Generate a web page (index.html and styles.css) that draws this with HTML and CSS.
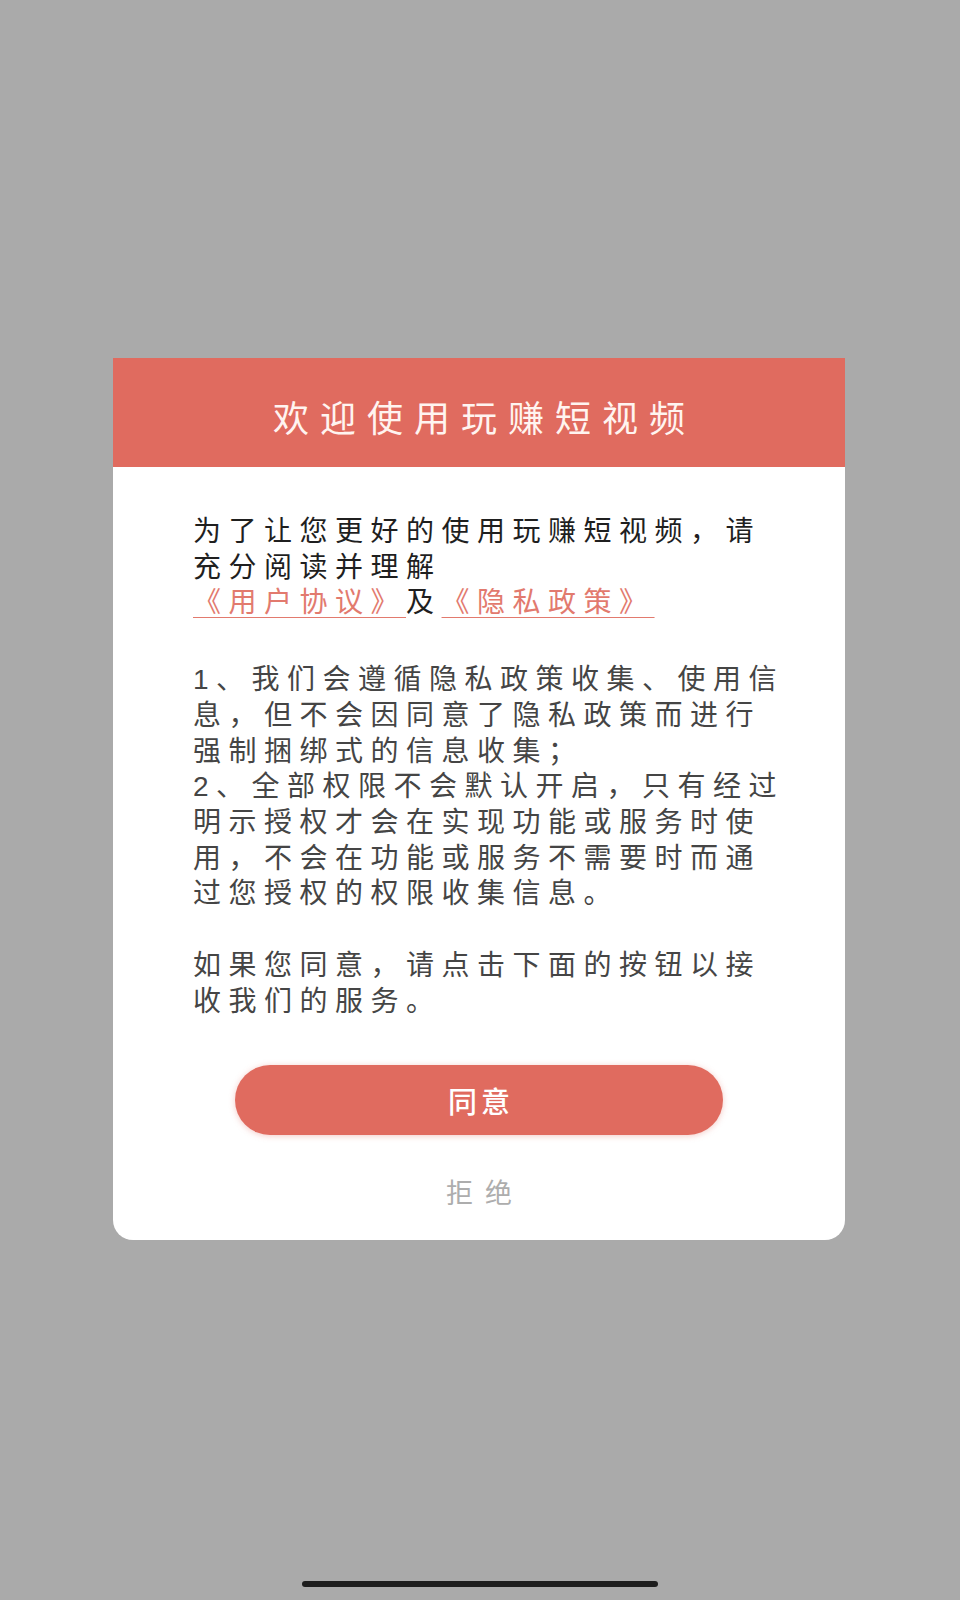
FILE: index.html
```html
<!DOCTYPE html>
<html lang="zh-CN">
<head>
<meta charset="utf-8">
<title>欢迎使用玩赚短视频</title>
<link rel="stylesheet" href="styles.css">
</head>
<body>
<div class="screen">
  <div class="dialog">
    <div class="dialog-header">欢迎使用玩赚短视频</div>
    <div class="dialog-body">
      <p class="intro">为了让您更好的使用玩赚短视频，请充分阅读并理解<br><a class="link" href="#">《用户协议》</a>及<a class="link" href="#">《隐私政策》</a></p>
      <p class="terms terms-list">1、我们会遵循隐私政策收集、使用信息，但不会因同意了隐私政策而进行强制捆绑式的信息收集；<br>2、全部权限不会默认开启，只有经过明示授权才会在实现功能或服务时使用，不会在功能或服务不需要时而通过您授权的权限收集信息。</p>
      <p class="terms terms-consent">如果您同意，请点击下面的按钮以接收我们的服务。</p>
      <button class="btn-agree">同意</button>
      <div class="btn-reject">拒绝</div>
    </div>
  </div>
  <div class="home-indicator"></div>
</div>
</body>
</html>
```

FILE: styles.css
```css
html, body {
  margin: 0;
  padding: 0;
  background: #aaaaaa;
}
.screen {
  width: 960px;
  height: 1600px;
  display: flex;
  flex-direction: column;
  align-items: center;
  padding-top: 358px;
  box-sizing: border-box;
  font-family: "Noto Sans CJK SC", "Noto Sans", sans-serif;
}
.dialog {
  width: 732px;
  margin-left: -2px;
  background: #ffffff;
  border-radius: 0 0 20px 20px;
  overflow: hidden;
}
.dialog-header {
  height: 109px;
  box-sizing: border-box;
  padding: 6px 0 0 11px;
  background: #e06b5f;
  color: #fff4f0;
  font-size: 36px;
  letter-spacing: 11px;
  display: flex;
  align-items: center;
  justify-content: center;
}
.dialog-body {
  padding: 47px 55px 30px 80px;
  display: flex;
  flex-direction: column;
}
.dialog-body p {
  margin: 0;
  font-family: "Liberation Sans", "Noto Sans CJK SC", sans-serif;
  font-size: 28px;
  line-height: 35.7px;
  letter-spacing: 7.5px;
}
.intro {
  color: #1f1f1f;
}
.terms {
  color: #454545;
}
.terms-list {
  margin-top: 41px !important;
}
.terms-consent {
  margin-top: 36px !important;
}
.link {
  color: #e27a6e;
  text-decoration: underline;
  text-underline-offset: 5px;
  text-decoration-thickness: 1px;
}
.btn-agree {
  align-self: center;
  margin-top: 46px;
  margin-left: -25px;
  width: 488px;
  height: 70px;
  border: none;
  border-radius: 35px;
  background: #e06b5f;
  box-shadow: 0 1px 6px rgba(224, 107, 95, 0.35);
  color: #ffffff;
  font-family: inherit;
  font-size: 29px;
  font-weight: 500;
  letter-spacing: 4px;
  padding: 0 0 0 4px;
}
.btn-reject {
  align-self: center;
  margin-top: 39px;
  margin-left: -25px;
  line-height: 36px;
  font-size: 27px;
  letter-spacing: 12px;
  padding-left: 12px;
  color: #adadad;
}
.home-indicator {
  margin-top: auto;
  margin-bottom: 13px;
  width: 356px;
  height: 6px;
  border-radius: 3px;
  background: #1e1e1e;
}
```
